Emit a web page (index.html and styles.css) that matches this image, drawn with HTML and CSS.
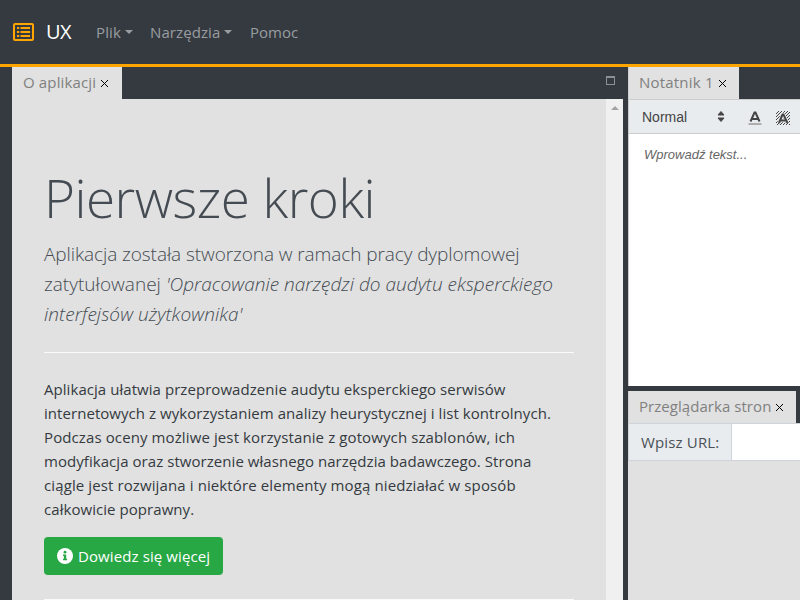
FILE: index.html
```html
<!DOCTYPE html>
<html lang="pl">
<head>
<meta charset="utf-8">
<title>UX</title>
<link rel="stylesheet" href="styles.css">
</head>
<body>
<nav class="navbar">
  <svg class="logo" width="22" height="20" viewBox="0 0 22 20" fill="none" stroke="#ffa500"><rect x="1" y="2" width="19" height="16" rx="1" stroke-width="2"/><path d="M7.500 6H17M7.500 10H17M7.500 14H17" stroke-width="2"/><path d="M4 6H6.200M4 10H6.200M4 14H6.200" stroke-width="2.200"/></svg>
  <span class="brand">UX</span>
  <span class="link file">Plik<i class="caret"></i></span>
  <span class="link tools">Narzędzia<i class="caret"></i></span>
  <span class="link help">Pomoc</span>
</nav>
<main class="workspace">
  <section class="left">
    <header class="tabs">
      <div class="tab about"><span>O aplikacji</span><svg class="close" width="9" height="9" viewBox="0 0 9 9"><path d="M1 1L8 8M8 1L1 8"/></svg></div>
      <i class="maximise"></i>
    </header>
    <div class="scroller">
      <article class="jumbotron">
        <h1>Pierwsze kroki</h1>
        <p class="lead"><span class="l1">Aplikacja została stworzona w ramach pracy dyplomowej</span><br><span class="l2">zatytułowanej <em>'Opracowanie narzędzi do audytu eksperckiego</em></span><br><em class="l3">interfejsów użytkownika'</em></p>
        <hr>
        <p class="copy">Aplikacja ułatwia przeprowadzenie audytu eksperckiego serwisów<br>internetowych z wykorzystaniem analizy heurystycznej i list kontrolnych.<br><span class="loose">Podczas oceny możliwe jest korzystanie z gotowych szablonów, ich</span><br>modyfikacja oraz stworzenie własnego narzędzia badawczego. Strona<br><span class="loose">ciągle jest rozwijana i niektóre elementy mogą niedziałać w sposób</span><br>całkowicie poprawny.</p>
        <a class="button"><svg width="16" height="16" viewBox="0 0 16 16"><circle cx="8" cy="8" r="8" fill="#fff"/><circle cx="8" cy="4.200" r="1.400" fill="#28a745"/><path d="M6 6.500h3.200v4.300h.9v1.500H6v-1.500h.9V8H6z" fill="#28a745"/></svg><span>Dowiedz się więcej</span></a>
        <hr class="last">
      </article>
      <div class="scrollbar"><i></i></div>
    </div>
  </section>
  <section class="right">
    <div class="notes">
      <header class="tabs"><div class="tab note"><span>Notatnik 1</span><svg class="close" width="9" height="9" viewBox="0 0 9 9"><path d="M1 1L8 8M8 1L1 8"/></svg></div></header>
      <div class="toolbar">
        <span class="format">Normal</span>
        <svg class="picker" width="8" height="11" viewBox="0 0 8 11"><path d="M1 4L4 .5 7 4zM1 7l3 3.500L7 7z" fill="#444" stroke="#444" stroke-linejoin="round"/></svg>
        <svg class="color" width="14" height="14" viewBox="0 0 14 14"><path d="M2.500 10.500L6.500 1.500h1L11.500 10.500M4 8h6" fill="none" stroke="#444" stroke-width="2"/><path d="M.5 13h13" stroke="#999" stroke-width="1.500"/></svg>
        <svg class="background" width="14" height="14" viewBox="0 0 14 14"><defs><pattern id="hatch" width="3" height="3" patternUnits="userSpaceOnUse"><path d="M-1 1L1-1M0 3L3 0M2 4L4 2" stroke="#444" stroke-width="1"/></pattern></defs><path d="M0 0h14v14H0z" fill="url(#hatch)"/><path d="M3 12L6.500 3.500h1L11.500 12M4.500 9.500h6" fill="none" stroke="#e9ecef" stroke-width="3.500"/><path d="M3 12L6.500 3.500h1L11.500 12M4.500 9.500h6" fill="none" stroke="#444" stroke-width="2"/></svg>
      </div>
      <div class="editor">Wprowadź tekst...</div>
    </div>
    <div class="browser">
      <header class="tabs"><div class="tab web"><span>Przeglądarka stron</span><svg class="close" width="9" height="9" viewBox="0 0 9 9"><path d="M1 1L8 8M8 1L1 8"/></svg></div></header>
      <div class="address"><label>Wpisz URL:</label><div class="field"></div></div>
      <div class="page"></div>
    </div>
  </section>
</main>
</body>
</html>
```
FILE: styles.css
```css
* { box-sizing: border-box; }
body { margin: 0; width: 800px; height: 600px; overflow: hidden; background: #343a40; font: 15px/24px "Open Sans", sans-serif; color: #343a40; }
.navbar { height: 67px; border-bottom: 3px solid #ffa500; display: flex; align-items: center; padding-left: 13px; }
.logo { flex: none; }
.brand { width: 50px; margin-left: 11px; color: #fff; font-size: 20px; letter-spacing: -.6px; }
.link { display: flex; align-items: center; color: #9a9da0; white-space: nowrap; }
.file { width: 54px; letter-spacing: .15px; }
.tools { width: 100px; letter-spacing: .1px; }
.caret { margin-left: 4px; border: 4.5px solid transparent; border-top-color: currentColor; border-bottom: 0; }
.workspace { display: flex; height: 533px; padding-left: 12px; gap: 5px; }
.left { width: 611px; display: flex; flex-direction: column; }
.right { width: 172px; display: flex; flex-direction: column; gap: 5px; }
.tabs { display: flex; justify-content: space-between; height: 32px; flex: none; }
.tab { display: flex; align-items: center; background: #e1e1e1; color: #808080; padding: 0 0 3px 11px; white-space: nowrap; letter-spacing: .14px; }
.about { width: 110px; }
.note { width: 111px; border: solid #ccd0d3; border-width: 0 0 0 1px; padding-left: 10px; letter-spacing: .2px; }
.web { width: 168px; border-left: 1px solid #ccd0d3; padding-left: 10px; letter-spacing: .05px; }
.close { margin: 3px 0 0 4px; flex: none; stroke: #000; fill: none; }
.maximise { width: 9px; height: 9px; border: 1px solid #8d9194; border-top-width: 2px; margin: 9px 8px 0 0; }
.scroller { flex: 1; min-height: 0; display: flex; background: #e1e1e1; }
.jumbotron { width: 594px; padding: 65px 32px 0; white-space: nowrap; }
h1 { margin: 0 0 8px; font-size: 53px; line-height: 67px; font-weight: 300; letter-spacing: -.5px; color: #444b52; }
.lead { margin: 0 0 23px; font-size: 19px; line-height: 30px; font-weight: 300; color: #444b52; }
.l1 { letter-spacing: -.08px; }
.l2 { letter-spacing: .02px; }
.l3 { letter-spacing: .06px; }
hr { margin: 0; border: 0; border-top: 1px solid #fafafa; }
.copy { margin: 24px 0 16px; letter-spacing: .055px; }
.loose { letter-spacing: .11px; }
.button { display: flex; align-items: center; width: 179px; height: 38px; padding: 0 0 0 13px; gap: 5px; border-radius: 4px; background: #28a745; color: #fff; letter-spacing: .1px; }
.last { margin-top: 24px; }
.scrollbar { width: 17px; background: #f0f0f0; display: flex; justify-content: center; padding-top: 7px; }
.scrollbar i { height: 0; border: 4px solid transparent; border-bottom-color: #a3a3a3; border-top: 0; }
.notes { height: 319px; display: flex; flex-direction: column; }
.toolbar { height: 35px; flex: none; border: 1px solid #ccc; border-right: 0; background: #e9ecef; display: flex; align-items: center; padding: 0 0 0 13px; }
.format { width: 75px; font: 500 14px "Liberation Sans", sans-serif; color: #444; }
.picker { flex: none; }
.color { flex: none; margin-left: 23px; margin-top: 2px; }
.background { flex: none; margin-left: 14px; margin-top: 3px; }
.editor { flex: 1; background: #fff; border-left: 1px solid #ccc; padding: 12px 15px; font: italic 13px/18px "Liberation Sans", sans-serif; color: #666; }
.browser { flex: 1; display: flex; flex-direction: column; }
.address { display: flex; flex: none; height: 38px; border: 1px solid #ced4da; border-right: 0; background: #fff; }
.address label { width: 103px; padding: 6px 0 0 12px; background: #e9ecef; border-right: 1px solid #ced4da; color: #495057; white-space: nowrap; letter-spacing: .15px; }
.field { flex: 1; }
.page { flex: 1; background: #e1e1e1; }
```
